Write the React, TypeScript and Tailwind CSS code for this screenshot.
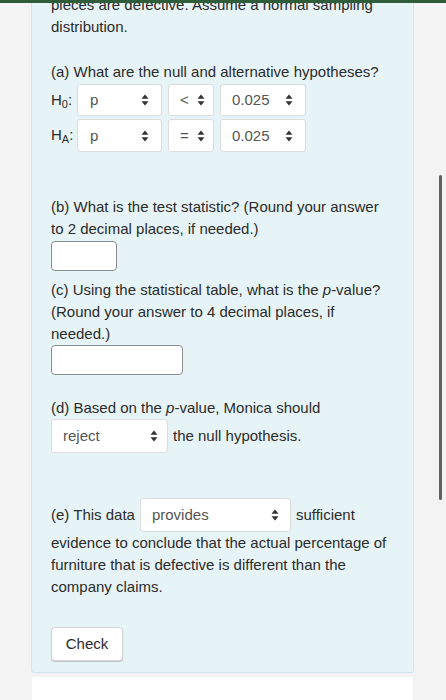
import React from "react";

const Arrows = () => (
  <svg width="8" height="12" viewBox="0 0 8 12" className="shrink-0">
    <path d="M4 0.5 L7.5 4.8 H0.5 Z" fill="#333" />
    <path d="M4 11.5 L7.5 7.2 H0.5 Z" fill="#333" />
  </svg>
);

const Select = ({ value, w, h = "h-[32px]", pl = "pl-[12px]", pr = "pr-[12px]" }: { value: string; w: string; h?: string; pl?: string; pr?: string }) => (
  <div className={`${w} ${h} ${pl} ${pr} flex items-center justify-between bg-white border border-[#dcdcdc] rounded-[3px] text-[#555]`}>
    <span>{value}</span>
    <Arrows />
  </div>
);

export default function App() {
  return (
    <div
      className="relative w-[446px] h-[700px] overflow-hidden bg-[#f3f3f3] text-[15px] leading-[22px] text-[#2b2b2b]"
      style={{ fontFamily: "'Liberation Sans', Arial, sans-serif" }}
    >
      <div className="ml-[31px] w-[383px] bg-[#e7f4f7] border border-[#d2e5ea] rounded-b-[3px] px-[19px] pb-[11px] mt-[-7px]">
        <div className="pt-0">
          <p className="whitespace-nowrap">pieces are defective. Assume a normal sampling</p>
          <p>distribution.</p>
        </div>

        <p className="mt-[23px]">(a) What are the null and alternative hypotheses?</p>
        <div className="mt-[1px] flex flex-col gap-[3px]">
          <div className="flex items-center">
            <span className="w-[26px] leading-[22px]">H<span className="text-[11px] relative top-[3px]">0</span>:</span>
            <div className="flex gap-[6px]">
              <Select value="p" w="w-[85px]" />
              <Select value="<" w="w-[46px]" pl="pl-[11px]" pr="pr-[8px]" />
              <Select value="0.025" w="w-[86px]" pl="pl-[11px]" />
            </div>
          </div>
          <div className="flex items-center">
            <span className="w-[26px] leading-[22px]">H<span className="text-[11px] relative top-[3px]">A</span>:</span>
            <div className="flex gap-[6px]">
              <Select value="p" w="w-[85px]" h="h-[33px]" />
              <Select value="=" w="w-[46px]" h="h-[33px]" pl="pl-[11px]" pr="pr-[8px]" />
              <Select value="0.025" w="w-[86px]" h="h-[33px]" pl="pl-[11px]" />
            </div>
          </div>
        </div>

        <p className="mt-[44px]">(b) What is the test statistic? (Round your answer to 2 decimal places, if needed.)</p>
        <div className="mt-[1px] w-[66px] h-[30px] bg-white border border-[#8e8e8e] rounded-[4px]" />

        <p className="mt-[8px]">
          (c) Using the statistical table, what is the <i>p</i>-value? (Round your answer to 4 decimal places, if needed.)
        </p>
        <div className="w-[132px] h-[30px] bg-white border border-[#8e8e8e] rounded-[4px]" />

        <p className="mt-[22px]">
          (d) Based on the <i>p</i>-value, Monica should
        </p>
        <div className="flex items-center">
          <Select value="reject" w="w-[117px]" h="h-[34px]" pl="pl-[11px]" pr="pr-[9px]" />
          <span className="ml-[5px]">the null hypothesis.</span>
        </div>

        <div className="mt-[45px] flex items-center">
          <span>(e) This data</span>
          <div className="ml-[5px]">
            <Select value="provides" w="w-[151px]" h="h-[34px]" pl="pl-[11px]" pr="pr-[11px]" />
          </div>
          <span className="ml-[5px]">sufficient</span>
        </div>
        <p>evidence to conclude that the actual percentage of furniture that is defective is different than the company claims.</p>

        <button className="mt-[29px] w-[72px] h-[34px] bg-white border border-[#d4d4d4] rounded-[4px] shadow-[0_1px_1px_rgba(0,0,0,0.2)] text-[#2b2b2b]">
          Check
        </button>
      </div>
      <div className="ml-[32px] w-[381px] mt-[4px] h-[40px] bg-white" />

      <div className="absolute top-0 left-0 w-full h-[3px] bg-[#2f5d3a]" />
      <div className="absolute left-[439px] top-[175px] w-[3px] h-[325px] rounded-full bg-[#5f5f5f]" />
    </div>
  );
}
